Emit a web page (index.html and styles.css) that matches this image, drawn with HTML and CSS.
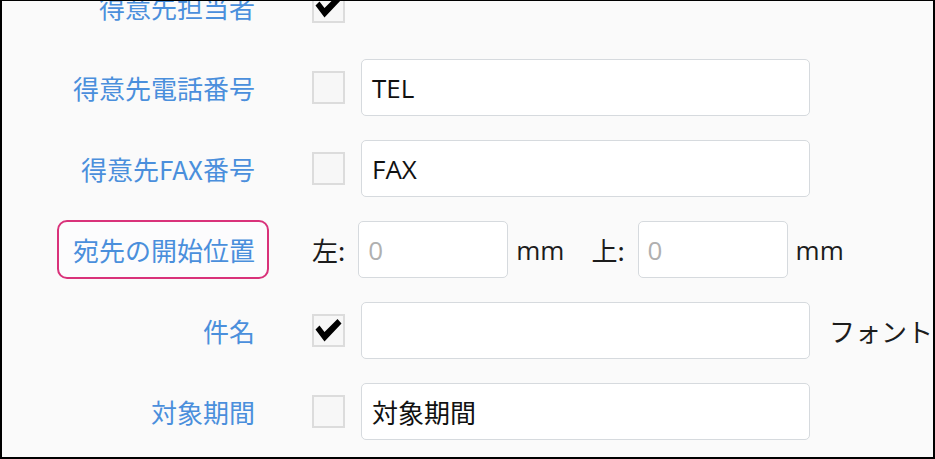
FILE: index.html
```html
<!DOCTYPE html>
<html lang="ja">
<head>
<meta charset="utf-8">
<link rel="stylesheet" href="styles.css">
</head>
<body>
<div class="frame">
  <div class="form">
    <div class="row">
      <div class="label"><span>得意先担当者</span></div>
      <div class="cb checked"><svg viewBox="0 0 29 29"><path d="M1.5 13.5 L5.5 9.5 L10.5 16 L23.5 3 L27.5 7.5 L10.5 25.5 Z"/></svg></div>
    </div>
    <div class="row">
      <div class="label"><span>得意先電話番号</span></div>
      <div class="cb"></div>
      <div class="input">TEL</div>
    </div>
    <div class="row">
      <div class="label"><span>得意先FAX番号</span></div>
      <div class="cb"></div>
      <div class="input">FAX</div>
    </div>
    <div class="row">
      <div class="label"><span class="hl">宛先の開始位置</span></div>
      <div class="pos">
        <span class="pos-label">左:</span>
        <div class="input small placeholder">0</div>
        <span class="unit">mm</span>
        <span class="pos-label second">上:</span>
        <div class="input small placeholder">0</div>
        <span class="unit">mm</span>
      </div>
    </div>
    <div class="row">
      <div class="label"><span>件名</span></div>
      <div class="cb checked"><svg viewBox="0 0 29 29"><path d="M1.5 13.5 L5.5 9.5 L10.5 16 L23.5 3 L27.5 7.5 L10.5 25.5 Z"/></svg></div>
      <div class="input"></div>
      <span class="font-label">フォントサイズ</span>
    </div>
    <div class="row">
      <div class="label"><span>対象期間</span></div>
      <div class="cb"></div>
      <div class="input">対象期間</div>
    </div>
  </div>
</div>
</body>
</html>
```

FILE: styles.css
```css
html, body {
  margin: 0;
  padding: 0;
  background: #fafafa;
}

.frame {
  box-sizing: border-box;
  width: 935px;
  height: 459px;
  border-style: solid;
  border-color: #000;
  border-width: 1px 2px 2px 2px;
  background: #fafafa;
  overflow: hidden;
  font-family: "Open Sans", "Noto Sans CJK JP", sans-serif;
  font-size: 26px;
  color: #1c1c1c;
}

.form {
  margin-top: -35px;
  display: flex;
  flex-direction: column;
}

.row {
  height: 81px;
  display: flex;
  align-items: center;
  white-space: nowrap;
}

.label {
  width: 253px;
  flex: none;
  display: flex;
  justify-content: flex-end;
  color: #4a8fdc;
  font-family: "Noto Sans CJK JP", sans-serif;
  margin-right: 57px;
}

.hl {
  border: 2.5px solid #d9327a;
  border-radius: 10px;
  padding: 9px 12px 9px 14px;
  margin-right: -14px;
  background: #fcfcfd;
}

.cb {
  flex: none;
  box-sizing: border-box;
  width: 33px;
  height: 33px;
  border: 2px solid #dcdcdc;
  background: #f7f7f7;
  margin-right: 16px;
  display: flex;
}

.cb svg {
  width: 29px;
  height: 29px;
}

.cb svg path {
  fill: #000;
}

.input {
  flex: none;
  box-sizing: border-box;
  width: 449px;
  height: 57px;
  border: 1.5px solid #d6dade;
  border-radius: 5px;
  background: #fff;
  padding: 0 10px;
  display: flex;
  align-items: center;
  color: #111;
}

.input.small {
  width: 150px;
}

.placeholder {
  color: #b0b0b0;
  padding-left: 9px;
}

.pos {
  display: flex;
  align-items: center;
}

.pos-label {
  font-family: "Noto Sans CJK JP", sans-serif;
  margin-right: 13px;
}

.pos-label.second {
  margin-left: 27px;
}

.unit {
  margin-left: 8px;
}

.font-label {
  margin-left: 19px;
  font-family: "Noto Sans CJK JP", sans-serif;
}
```
